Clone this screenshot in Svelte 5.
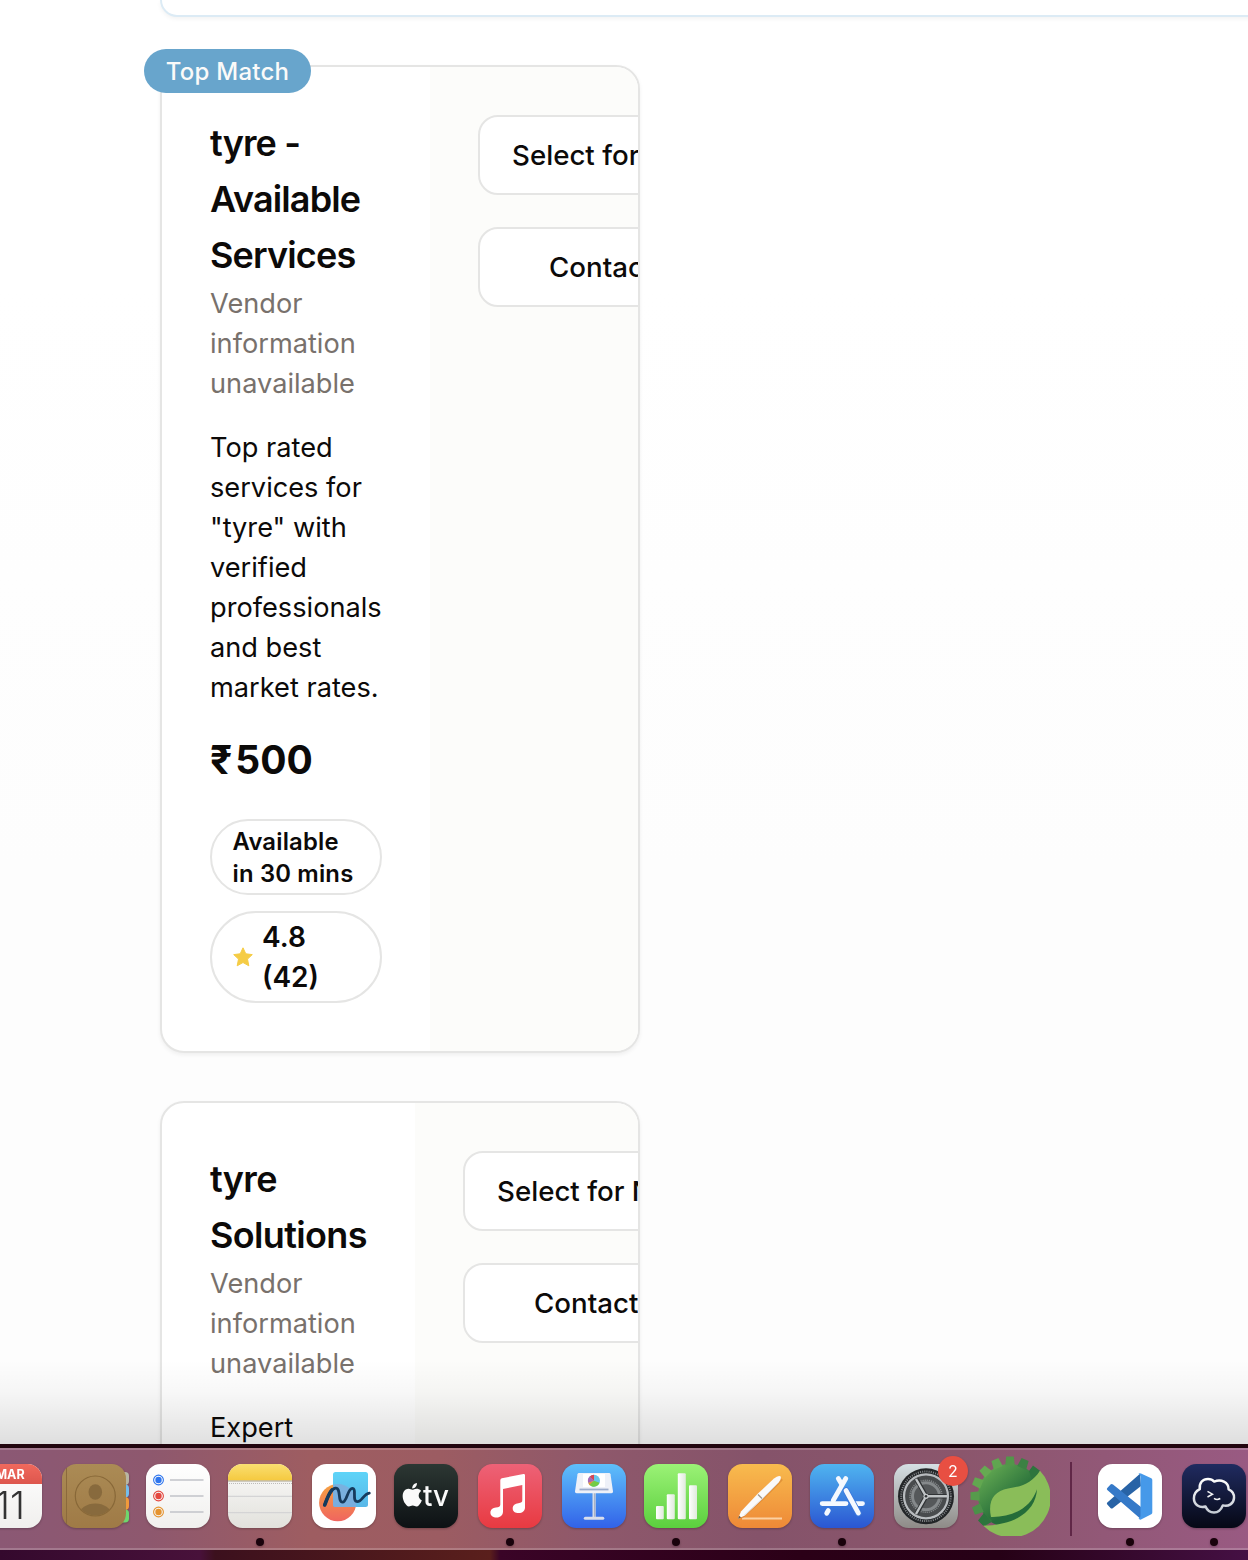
<script>
  const vendor = ['Vendor', 'information', 'unavailable'];
  const cards = [
    {
      title: ['tyre -', 'Available', 'Services'],
      description: ['Top rated', 'services for', '"tyre" with', 'verified', 'professionals', 'and best', 'market rates.'],
      top: true,
      price: '500',
      time: ['Available', 'in 30 mins'],
      rating: ['4.8', '(42)']
    },
    {
      title: ['tyre', 'Solutions'],
      description: ['Expert'],
      top: false
    }
  ];
  const tabs = ['#b9b7a4', '#74bdec', '#f19a3b', '#6fd66d'];
  const tasks = [
    { y: 16, color: '#2f76ee' },
    { y: 32, color: '#e4473f' },
    { y: 48, color: '#e5932f' }
  ];
  const springTeeth = [
    { angle: -135, color: '#3b8144' },
    { angle: -112.5, color: '#4b9149' },
    { angle: -90, color: '#569b4c' },
    { angle: -67.5, color: '#62a750' },
    { angle: -45, color: '#66aa52' },
    { angle: -22.5, color: '#60a550' },
    { angle: 0, color: '#529649' },
    { angle: 22.5, color: '#3c8143' }
  ];
</script>

<div class="screen">
  <main class="page">
    <div class="search-panel"></div>
    {#each cards as card}
      <article class="card" class:narrow={!card.top}>
        {#if card.top}<span class="top-match">Top Match</span>{/if}
        <div class="clip">
          <div class="info">
            <h3>{#each card.title as line}<span>{line}</span>{/each}</h3>
            <p class="vendor">{#each vendor as line}<span>{line}</span>{/each}</p>
            <p class="desc">{#each card.description as line}<span>{line}</span>{/each}</p>
            {#if card.price}
              <div class="price"><span class="rupee">₹</span>{card.price}</div>
              <div class="pill time">{#each card.time as line}<span>{line}</span>{/each}</div>
              <div class="pill rating">
                <svg width="20" height="20" viewBox="0 0 20 20"><path d="M10 .8l2.8 6 6.500.8-4.800 4.500 1.300 6.700-5.800-3.300-5.800 3.300 1.300-6.700L.7 7.600l6.500-.8z" fill="#f5cc45" stroke="#f5cc45" stroke-linejoin="round" /></svg>
                <div>{#each card.rating as line}<span>{line}</span>{/each}</div>
              </div>
            {/if}
          </div>
          <div class="actions">
            <button>Select for Negotiation</button>
            <button class="contact">Contact Vendor</button>
          </div>
        </div>
      </article>
    {/each}
    <div class="shade"></div>
  </main>

  <footer class="desktop">
    <nav class="dock">
      <!-- Calendar -->
      <svg class="app" viewBox="0 0 64 64">
        <defs>
          <linearGradient id="calRed" x2="0" y2="1"><stop stop-color="#f0695d" /><stop offset="1" stop-color="#dd564d" /></linearGradient>
          <linearGradient id="paper" x2="0" y2="1"><stop stop-color="#fff" /><stop offset="1" stop-color="#f0efed" /></linearGradient>
          <clipPath id="tile"><rect width="64" height="64" rx="14.5" /></clipPath>
        </defs>
        <g clip-path="url(#tile)">
          <rect width="64" height="64" fill="url(#paper)" />
          <rect width="64" height="20" fill="url(#calRed)" />
        </g>
        <text x="32" y="15.2" class="month">MAR</text>
        <text x="32" y="54.500" class="day">11</text>
      </svg>
      <!-- Contacts -->
      <svg class="app" viewBox="0 0 64 64">
        <defs>
          <linearGradient id="leather" x2="0" y2="1"><stop stop-color="#ab8b55" /><stop offset="1" stop-color="#9f7a46" /></linearGradient>
          <clipPath id="portrait"><circle cx="33.3" cy="32" r="19.5" /></clipPath>
        </defs>
        {#each tabs as color, i}
          <rect x="54" y={8 + i * 12.5} width="13" height="13" rx="4" fill={color} />
        {/each}
        <rect width="64" height="64" rx="14.5" fill="url(#leather)" />
        <path d="M4.500 4V60" stroke="#8b6a3c" stroke-width="1" />
        <ellipse cx="33.3" cy="28" rx="6.8" ry="7.8" fill="#886a3d" />
        <ellipse cx="33.3" cy="51" rx="16" ry="11.5" fill="#886a3d" clip-path="url(#portrait)" />
        <circle cx="33.3" cy="32" r="20" fill="none" stroke="#886838" stroke-width="1.2" />
      </svg>
      <!-- Reminders -->
      <svg class="app" viewBox="0 0 64 64">
        <rect width="64" height="64" rx="14.5" fill="url(#paper)" />
        {#each tasks as task}
          <circle cx="12.5" cy={task.y} r="4.9" fill="none" stroke={task.color} stroke-width="1.1" />
          <circle cx="12.5" cy={task.y} r="3.2" fill={task.color} />
          <path d="M24 {task.y}h33.500" stroke="#c2c3c8" stroke-width="1.5" />
        {/each}
      </svg>
      <!-- Notes -->
      <svg class="app tight" viewBox="0 0 64 64">
        <defs>
          <linearGradient id="noteTop" x2="0" y2="1"><stop stop-color="#fadf71" /><stop offset="1" stop-color="#f5c93f" /></linearGradient>
          <linearGradient id="notePaper" x2="0" y2="1"><stop stop-color="#fbfbfa" /><stop offset="1" stop-color="#e2e1dc" /></linearGradient>
        </defs>
        <g clip-path="url(#tile)">
          <rect width="64" height="64" fill="url(#notePaper)" />
          <rect width="64" height="16.5" fill="url(#noteTop)" />
          <path d="M0 17h64" stroke="#a8a08a" stroke-width="1" />
          <path d="M1 19.500h63" stroke="#bdbcb9" stroke-width="1" stroke-dasharray="1 1" />
          <path d="M0 32.300h64M0 48.700h64" stroke="#d4d4d5" stroke-width="1.2" />
        </g>
        <circle class="running" cx="32" cy="78" r="4" />
      </svg>
      <!-- Freeform -->
      <svg class="app" viewBox="0 0 64 64">
        <defs>
          <linearGradient id="sunset" x2="0" y2="1"><stop stop-color="#f5a142" /><stop offset="1" stop-color="#f0655f" /></linearGradient>
          <linearGradient id="sky" x2="0" y2="1"><stop stop-color="#5ed4f8" /><stop offset="1" stop-color="#59b7e8" /></linearGradient>
          <clipPath id="sheet"><rect x="21" y="8" width="35" height="35" rx="2.5" /></clipPath>
        </defs>
        <rect width="64" height="64" rx="14.5" fill="#fff" />
        <circle cx="25.7" cy="38.7" r="18.6" fill="url(#sunset)" />
        <rect x="21" y="8" width="35" height="35" rx="2.5" fill="url(#sky)" />
        <circle cx="25.7" cy="38.7" r="18.6" fill="#83a9d9" opacity=".75" clip-path="url(#sheet)" />
        <path d="M12.700 41C15 35 18 25 23.500 24.200c5.800-.6 2 14 7 14 4.500 0 5-13.800 9.800-13.800 4.800 0-.8 13.200 5.200 13.200 4.500 0 6-7.600 11.800-8.500" fill="none" stroke="#163b5d" stroke-width="2.8" stroke-linecap="round" />
        <path d="M12.700 41C14.500 36 17 29 20 26" fill="none" stroke="#163b5d" stroke-width="3.6" stroke-linecap="round" />
      </svg>
      <!-- Apple TV -->
      <svg class="app tight" viewBox="0 0 64 64">
        <defs><linearGradient id="night" x2="0" y2="1"><stop stop-color="#2c3733" /><stop offset="1" stop-color="#0d1114" /></linearGradient></defs>
        <rect width="64" height="64" rx="14.5" fill="url(#night)" />
        <path transform="translate(6.500 19) scale(.98)" fill="#fafafa" d="M12.152 6.896c-.948 0-2.415-1.078-3.960-1.040-2.040.027-3.910 1.183-4.961 3.014-2.117 3.675-.546 9.103 1.519 12.090 1.013 1.454 2.208 3.090 3.792 3.039 1.520-.065 2.090-.987 3.935-.987 1.831 0 2.350.987 3.960.948 1.637-.026 2.676-1.480 3.676-2.948 1.156-1.688 1.636-3.325 1.662-3.415-.039-.013-3.182-1.221-3.220-4.857-.026-3.040 2.480-4.494 2.597-4.559-1.429-2.090-3.623-2.324-4.390-2.376-2-.156-3.675 1.090-4.610 1.090zM15.530 3.830c.843-1.012 1.400-2.427 1.245-3.830-1.207.052-2.662.805-3.532 1.818-.78.896-1.454 2.338-1.273 3.714 1.338.104 2.715-.688 3.559-1.701" />
        <text x="29" y="42.400" class="tv" textLength="26" lengthAdjust="spacingAndGlyphs">tv</text>
      </svg>
      <!-- Music -->
      <svg class="app" viewBox="0 0 64 64">
        <defs><linearGradient id="music" x2="0" y2="1"><stop stop-color="#ed6277" /><stop offset="1" stop-color="#e83a41" /></linearGradient></defs>
        <rect width="64" height="64" rx="14.5" fill="url(#music)" />
        <path d="M22.300 16.200q0-1.500 1.500-1.900L45.500 10q1.500-.2 1.500 1.200V43.500c0 3.400-2.600 5.600-6.300 5.600-3.400 0-6-1.900-6-4.700 0-3 2.500-4.800 5.600-5.100 3-.4 4-.8 4-3.200V21L25 25V47.500c0 3.600-2.500 6-6.400 6-3.600 0-6.200-1.900-6.200-4.800 0-2.900 2.400-4.700 5.500-5.100 3-.4 4.400-.8 4.400-3z" fill="#fff" />
        <circle class="running" cx="32" cy="78" r="4" />
      </svg>
      <!-- Keynote -->
      <svg class="app" viewBox="0 0 64 64">
        <defs><linearGradient id="key" x2="0" y2="1"><stop stop-color="#5ec0fb" /><stop offset="1" stop-color="#3262e8" /></linearGradient></defs>
        <rect width="64" height="64" rx="14.5" fill="url(#key)" />
        <path d="M30.500 28h3.200v25h-3.200z" fill="#d6dce7" /><path d="M32.700 29v24" stroke="#929bb0" stroke-width=".8" />
        <rect x="21.8" y="52.7" width="20.5" height="3" rx="1.5" fill="#d9deeb" />
        <path d="M17 9h30q1.300 0 1.500 1.200L51 27.500q.2 1.800-1.600 1.800H14.600q-1.800 0-1.600-1.800L15.500 10.200Q15.700 9 17 9z" fill="#eef1f8" />
        <rect x="21" y="10" width="22" height="13" fill="#fff" />
        <path d="M17.500 25.500h29" stroke="#9caccb" stroke-width="1.8" />
        <circle cx="32" cy="16.8" r="6" fill="#67c6ea" />
        <path d="M32 16.800v-6a6 6 0 0 0-4.500 2z" fill="#d84452" /><path d="M32 16.800l-4.500-4a6 6 0 0 0-1.300 6z" fill="#a866b5" /><path d="M32 16.800l-5.800 2A6 6 0 0 0 28 21.500z" fill="#f28e36" /><path d="M32 16.800l-4.500 4a6 6 0 0 0 10-2z" fill="#73cc45" />
      </svg>
      <!-- Numbers -->
      <svg class="app tight" viewBox="0 0 64 64">
        <defs>
          <linearGradient id="green" x2="0" y2="1"><stop stop-color="#9bf276" /><stop offset="1" stop-color="#5bcf3e" /></linearGradient>
          <linearGradient id="bar"><stop stop-color="#fff" /><stop offset="1" stop-color="#e0eadc" /></linearGradient>
        </defs>
        <rect width="64" height="64" rx="14.5" fill="url(#green)" />
        <g fill="url(#bar)"><rect x="12" y="42" width="7.8" height="13.3" rx="1" /><rect x="22.8" y="30.3" width="8" height="25" rx="1" /><rect x="33.8" y="9.3" width="8" height="46" rx="1" /><rect x="45" y="21.3" width="8" height="34" rx="1" /></g>
        <circle class="running" cx="32" cy="78" r="4" />
      </svg>
      <!-- Pages -->
      <svg class="app" viewBox="0 0 64 64">
        <defs><linearGradient id="orange" x2="0" y2="1"><stop stop-color="#f8bb4e" /><stop offset="1" stop-color="#ee8937" /></linearGradient></defs>
        <rect width="64" height="64" rx="14.5" fill="url(#orange)" />
        <path d="M14 54.600h40" stroke="#fbd0a2" stroke-width="2" />
        <path d="M14 53L34 35 53 16" stroke="#c46c21" stroke-width="3" opacity=".4" stroke-linecap="round" />
        <path d="M10 54.700l3-7.200 16.700-17.700L46 14.500Q50 11 52.500 12.200q1.300 2.500-2 6.500L34.500 35 17 51.500z" fill="#fafafa" />
        <path d="M30 30.500l4 4" stroke="#9d9689" stroke-width="1.2" /><path d="M10 54.700l1.200-3 2 1.800z" fill="#6c5942" />
        <path d="M16 51.500L34 35 50 19" stroke="#d4d3d2" stroke-width=".8" fill="none" />
      </svg>
      <!-- App Store -->
      <svg class="app tight" viewBox="0 0 64 64">
        <defs><linearGradient id="store" x2="0" y2="1"><stop stop-color="#4fb4f0" /><stop offset="1" stop-color="#2b56d2" /></linearGradient></defs>
        <rect width="64" height="64" rx="14.5" fill="url(#store)" />
        <g stroke="#f4f8fe" stroke-width="4.8" stroke-linecap="round">
          <path d="M28.300 14.500l3 5M18.300 46.500l-1.600 2.800" />
          <path d="M12.200 39.600H36M44 39.600h8.500" />
          <path d="M35.800 14.500L23.200 36.500" />
        </g>
        <path d="M36 26.500l12.400 22.600" stroke="#3b78dc" stroke-width="6.5" stroke-linecap="round" />
        <path d="M36 26.500l12.400 22.600" stroke="#f4f8fe" stroke-width="4.8" stroke-linecap="round" />
        <circle class="running" cx="32" cy="78" r="4" />
      </svg>
      <!-- System Settings -->
      <div class="app">
        <svg class="gear" viewBox="0 0 64 64">
          <defs><linearGradient id="metal" x2="0" y2="1"><stop stop-color="#d5dfe3" /><stop offset="1" stop-color="#8e8b87" /></linearGradient></defs>
          <rect width="64" height="64" rx="14.5" fill="url(#metal)" />
          <g fill="none">
            <circle cx="32" cy="32.3" r="28" fill="#222527" />
            <circle cx="32" cy="32.3" r="24.8" stroke="#85898c" stroke-width="2" stroke-dasharray="1 1.200" />
            <circle cx="32" cy="32.3" r="22" fill="#484b4d" stroke="#b8bcbf" stroke-width="2.2" />
            <circle cx="32" cy="32.3" r="16" stroke="#85898b" stroke-width="1.4" stroke-dasharray="1.200 .9" />
            <circle cx="32" cy="32.3" r="13.5" fill="#55585a" stroke="#85898b" stroke-width="3" />
            <path d="M32 32.300h20.500M32 32.300L22.500 15M32 32.300L22.500 50" stroke="#303335" stroke-width="4.6" />
            <path d="M32 32.300h21M32 32.300L22 15M32 32.300L22 50" stroke="#bfc3c5" stroke-width="2.4" />
            <circle cx="32" cy="32.3" r="2.6" fill="#c6c9cb" /><circle cx="32" cy="32.3" r="1.3" fill="#34373a" />
          </g>
        </svg>
        <span class="count">2</span>
      </div>
      <!-- Spring Tools -->
      <svg class="spring" viewBox="0 0 80 80">
        <defs><linearGradient id="leafDark" gradientUnits="userSpaceOnUse" x1="12" y1="20" x2="40" y2="52"><stop stop-color="#5fa550" /><stop offset="1" stop-color="#246c39" /></linearGradient></defs>
        <circle cx="40" cy="40" r="32" fill="url(#leafDark)" />
        {#each springTeeth as tooth}
          <path d="M36.200.5h7.600L44.800 9.500h-9.600z" transform="rotate({tooth.angle} 40 40)" fill={tooth.color} />
        {/each}
        <path d="M59 15L63 9.500 70 14.700 63 27zM8 64.500L13.300 69.700 22 66 14 57z" fill="#2d753d" />
        <path d="M70 14.700C62 27 52 30.500 38 32.500 24 35 17.500 45 21 61c19 .5 39-7 46-27.700C66 52 50 69 13.300 69.700A39.500 39.500 0 0 0 70 14.700z" fill="#8abd59" />
      </svg>
      <span class="divider"></span>
      <!-- Visual Studio Code -->
      <svg class="app" viewBox="0 0 64 64">
        <rect width="64" height="64" rx="14.5" fill="#fff" />
        <path d="M42 9.700L9.300 38.500q-1 1 0 2l3.200 3.400q1.200 1 2.500 0L43 22z" fill="#2863a6" />
        <path d="M9.300 26q-1-1 0-2l3.200-3.400q1.200-1 2.500 0L43 43v12.300z" fill="#3579c8" />
        <path d="M40.500 54.500Q42.500 54 42.500 52V13q0-2-2-3.300 1-.8 2.500-.2L53.300 14.300q1 .5 1 1.700V48.500q0 1.200-1 1.700L43 55.500q-1.500.5-2.500-1z" fill="#4699e9" />
        <circle class="running" cx="32" cy="78" r="4" />
      </svg>
      <!-- Termius -->
      <svg class="app" viewBox="0 0 64 64">
        <defs>
          <linearGradient id="term" x2="0" y2="1"><stop stop-color="#202b60" /><stop offset="1" stop-color="#060815" /></linearGradient>
          <linearGradient id="cloud" x2="0" y2="1"><stop stop-color="#fff" /><stop offset="1" stop-color="#c5cbd4" /></linearGradient>
        </defs>
        <rect width="64" height="64" rx="14.5" fill="url(#term)" />
        <path d="M17.800 25.200C17 18.500 21 14.900 26 14.900c2.600 0 4.800 1 6.300 2.700C39 15 46.500 18 46.600 25.300 50.500 27 52.300 30 52 34c-.2 5.500-5.500 9-11.200 7.400C39 46 36 48.500 32 48.500s-7-2.500-8.500-6C17.500 44.500 12 40.500 11.900 34.500c0-4 2.100-7.500 5.900-9.300z" fill="none" stroke="url(#cloud)" stroke-width="2.5" stroke-linejoin="round" />
        <path d="M25.500 27.300l5 2.900-5 2.800M32 34.300q3 2.200 6.300.2" fill="none" stroke="#f2f3f5" stroke-width="1.5" />
        <circle class="running" cx="32" cy="78" r="4" />
      </svg>
    </nav>
  </footer>
</div>

<style>
  :global(body) { margin: 0; overflow: hidden; }
  .screen { width: 1248px; height: 1560px; overflow: hidden; font-family: Inter, sans-serif; color: #0c0a09; display: flex; flex-direction: column; }
  .page { position: relative; height: 1444px; flex: none; overflow: hidden; padding-left: 160px; box-sizing: border-box; background: linear-gradient(#fff, #fff 20%, #fdfdfd 60%, #fdfdfd); }
  .search-panel { box-sizing: border-box; height: 17px; width: 1200px; border: 2px solid #dcebf5; border-top: 0; border-radius: 0 0 24px 24px; background: #fff; box-shadow: 0 2px 4px rgba(0, 0, 0, .05); margin-bottom: 48px; }
  .card { position: relative; box-sizing: border-box; width: 480px; border: 2px solid #e5e5e4; border-radius: 24px; background: #fff; box-shadow: 0 2px 4px rgba(0, 0, 0, .06); margin-bottom: 48px; }
  .narrow { height: 960px; }
  .clip { display: flex; height: 100%; overflow: hidden; border-radius: 22px; }
  .info { flex: none; box-sizing: border-box; width: 268px; padding: 48px; }
  .narrow .info { width: 253px; }
  h3, p { margin: 0; }
  h3 span, p span, .pill span { display: block; white-space: nowrap; }
  h3 { font-size: 36px; line-height: 56px; font-weight: 600; letter-spacing: -.85px; }
  .narrow h3 { letter-spacing: -.65px; }
  p { font-size: 27.2px; line-height: 40px; padding-top: 1px; margin-bottom: -1px; }
  .vendor { color: #78716c; }
  .desc { margin-top: 24px; }
  .price { box-sizing: border-box; height: 56px; margin: 24px 0 32px; padding-top: 1px; font-size: 39px; line-height: 56px; font-weight: 700; }
  .rupee { margin-right: 3px; }
  .pill { box-sizing: border-box; border: 2px solid #e5e5e4; border-radius: 50px; padding: 5px 20px 3px; font-weight: 600; }
  .time { font-size: 23.800px; line-height: 32px; letter-spacing: .2px; padding-left: 20.500px; padding-right: 10px; }
  .rating { display: flex; align-items: center; gap: 9px; margin-top: 16px; padding: 4px 20px 4px 21px; font-size: 28px; line-height: 40px; }
  .rating svg { flex: none; }
  .actions { flex: 1; min-width: 0; display: flex; flex-direction: column; gap: 32px; padding: 48px 0 48px 48px; background: #fcfcfa; }
  button { box-sizing: border-box; flex: none; width: 370px; height: 80px; padding: 0 32px; border: 2px solid #e5e5e4; border-radius: 20px; background: #fff; font: 500 27.7px/40px Inter, sans-serif; color: #0c0a09; text-align: left; white-space: nowrap; }
  .contact { padding-left: 69px; }
  .top-match { position: absolute; z-index: 1; left: -18px; top: -18px; width: 167px; height: 44px; border-radius: 22px; background: #68a5cc; color: #fafaf9; font-size: 24px; font-weight: 500; letter-spacing: .25px; line-height: 45px; text-align: center; }
  .shade { position: absolute; left: 0; right: 0; bottom: 0; height: 84px; background: linear-gradient(rgba(0, 0, 0, 0), rgba(0, 0, 0, .03) 40%, rgba(0, 0, 0, .12)); }
  .desktop { box-sizing: border-box; height: 116px; padding-top: 4px; background: linear-gradient(90deg, #34092d, #48113a 200px, #3c101d 215px, #5a1f1c 490px, #3a0427 500px, #2b0017 800px, #260116 1000px, #451044); box-shadow: inset 0 4px #22060f; }
  .dock { box-sizing: border-box; height: 102px; display: flex; align-items: center; gap: 20px; border-top: 2px solid rgba(255, 255, 255, .2); border-bottom: 2px solid rgba(255, 255, 255, .2); background: linear-gradient(90deg, #8b5874, #8e586e 150px, #9e5d61 310px, #9c5c62 440px, #8e586b 600px, #85536a 760px, #8b566c 960px, #995a82); }
  .app { position: relative; flex: none; width: 64px; height: 64px; overflow: visible; margin-bottom: 6px; filter: drop-shadow(0 1px 1px rgba(0, 0, 0, .25)); }
  .app:first-child { margin-left: -22px; }
  .tight { margin-left: -2px; }
  .gear { display: block; width: 64px; height: 64px; }
  .running { fill: #19020b; }
  .month { font: 700 12.5px Inter, sans-serif; fill: #fff; text-anchor: middle; }
  .day { font: 300 38px Inter, sans-serif; fill: #333; text-anchor: middle; }
  .tv { font: 500 29px Inter, sans-serif; fill: #fafafa; }
  .count { position: absolute; left: 44px; top: -8px; width: 30px; height: 30px; border-radius: 50%; background: #e84f42; color: #fff; font-size: 16px; line-height: 30px; text-align: center; }
  .spring { flex: none; width: 80px; height: 80px; margin: 0 0 6px -8px; }
  .divider { flex: none; width: 2px; height: 74px; background: #602747; margin-right: 6px; }
</style>
